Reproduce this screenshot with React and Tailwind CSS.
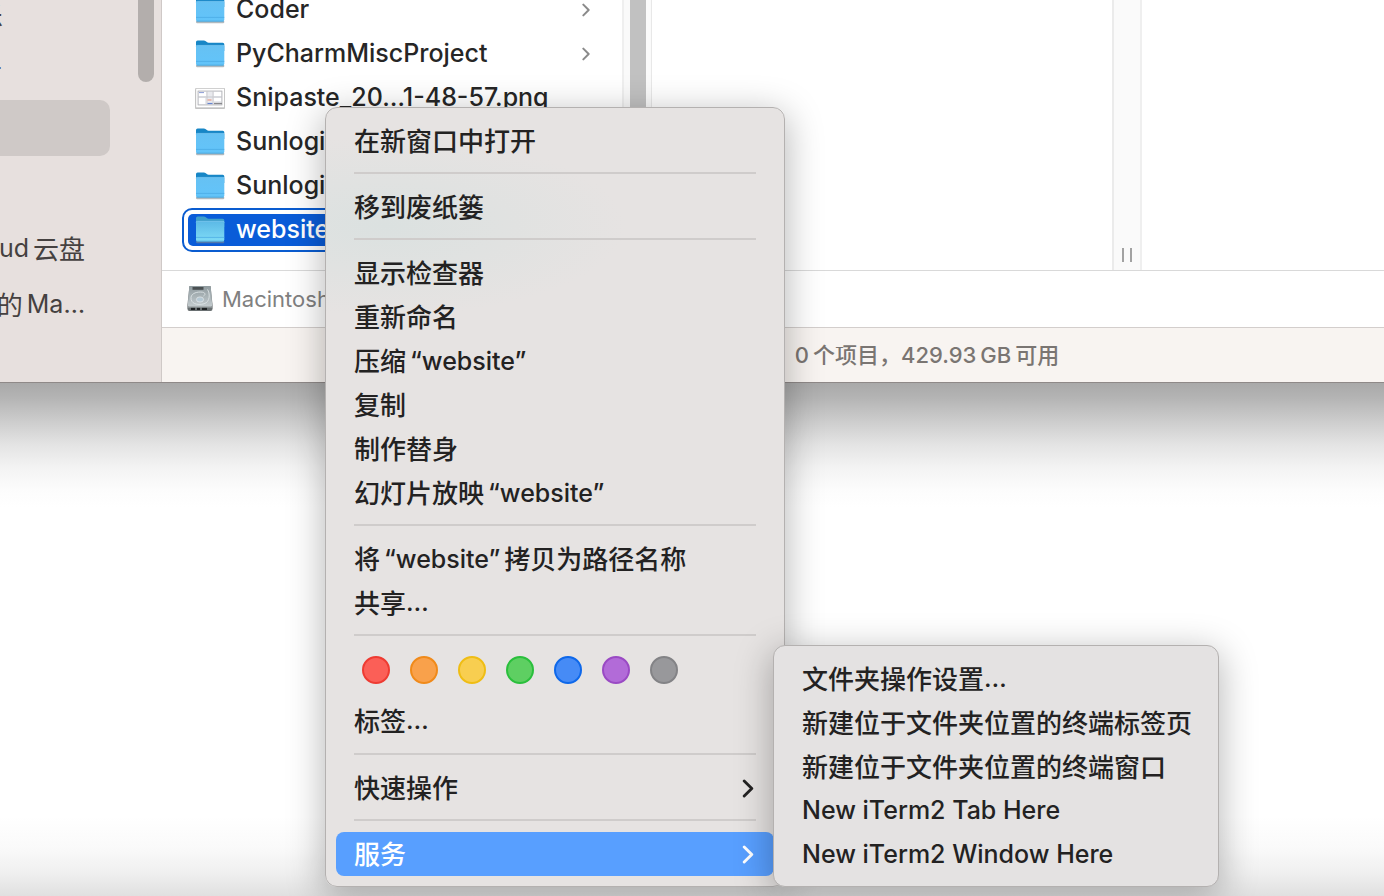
import React from 'react';

function Folder({ open }) {
  const face = open ? 'url(#folderOpen)' : 'url(#folderFace)';
  return (
    <svg viewBox="0 0 32 30" className="h-[30px] w-8 shrink-0" aria-hidden="true">
      <defs>
        <linearGradient id="folderFace" x1="0" y1="0" x2="0" y2="1">
          <stop offset="0" stopColor="#66c1f3" />
          <stop offset="1" stopColor="#62c4fa" />
        </linearGradient>
        <linearGradient id="folderOpen" x1="0" y1="0" x2="0" y2="1">
          <stop offset="0" stopColor="#5cb9e6" />
          <stop offset="1" stopColor="#7fdcf7" />
        </linearGradient>
      </defs>
      <rect x="2" y="25.500" width="28.300" height="2.800" rx="1.200" fill="#7d8a92" opacity=".6" />
      <path d="M2 3Q2 1.400 3.600 1.400H9.800Q11 1.400 11.800 2.200L12.800 3.100Q13.500 3.700 14.600 3.700H28.700Q30.300 3.700 30.300 5.300V12H2Z" fill={open ? '#3f9fcb' : '#1786c6'} />
      <path d="M2 7.600Q2 6.400 3.200 6.400H29.100Q30.300 6.400 30.300 7.600V24.800Q30.300 26.600 28.500 26.600H3.800Q2 26.600 2 24.800Z" fill={face} />
      <path d="M2 7.400Q2 6.400 3.200 6.400H29.100Q30.300 6.400 30.300 7.400" fill="none" stroke="#8bd2f8" strokeWidth=".6" />
      <path d="M2 22.400H30.300" stroke="#48a9e2" strokeWidth=".7" />
      <path d="M2.600 26.200H29.700" stroke="#48a3d8" strokeWidth=".8" />
    </svg>
  );
}

function Shot() {
  return (
    <svg viewBox="0 0 32 30" className="h-[30px] w-8 shrink-0" aria-hidden="true">
      <rect x="1" y="6" width="30" height="20" rx="1" fill="#9c9c9c" opacity=".6" />
      <rect x="1.800" y="5.600" width="28.600" height="19.200" fill="#fff" stroke="#bdbdbd" strokeWidth=".7" />
      <rect x="4" y="8" width="24" height="14" fill="#e9eaee" stroke="#9a9a9e" strokeWidth=".6" />
      <path d="M5 9h7v4H5zM20 9h7v4h-7zM5 15h6v6H5zM20 15h7v3h-7z" fill="#fff" />
      <path d="M5 9.600h5" stroke="#7d8fd0" strokeWidth=".9" />
      <path d="M4 14h24" stroke="#b9bac0" strokeWidth=".7" />
      <path d="M13 8v14M19 8v14" stroke="#c6c6ca" strokeWidth=".8" />
      <path d="M13.500 17h4" stroke="#e8ab9d" strokeWidth="1.500" />
      <path d="M13.500 20.500h5" stroke="#6685d0" strokeWidth="1.200" />
      <path d="M20 20.500h8" stroke="#88888c" strokeWidth="1.300" />
    </svg>
  );
}

function Disk() {
  return (
    <svg viewBox="0 0 28 28" className="h-7 w-7 shrink-0" aria-hidden="true">
      <defs>
        <linearGradient id="diskFace" x1="0" y1="0" x2="0" y2="1">
          <stop offset="0" stopColor="#8f9a9e" />
          <stop offset="1" stopColor="#c3cbce" />
        </linearGradient>
      </defs>
      <path d="M3.500 1H24.500L26.600 20V23.500Q26.600 26 24.500 26H3.500Q1.400 26 1.400 23.500V20Z" fill="#6a7072" />
      <path d="M4.200 1H23.800Q24.600 1 24.800 2L26.200 20Q26.400 21.400 25 21.400H3Q1.600 21.400 1.800 20L3.200 2Q3.400 1 4.200 1Z" fill="url(#diskFace)" />
      <path d="M6.500 2H17.500V4.800H6.500Z" fill="#4a5052" />
      <path d="M21.500 4.500C24 8 24.500 17 18 18.800C11 20.600 4.500 18.500 5 12.500C5.500 8 11.500 6.500 16.500 7.200C19 7.600 20 9.500 17.500 11" fill="none" stroke="#dde3e5" strokeWidth=".9" />
      <ellipse cx="14" cy="14.500" rx="3.600" ry="2.600" fill="#b5c8d3" stroke="#e6eaec" strokeWidth=".7" />
      <path d="M5 22.800H9V25H5ZM11 22.800H14V25H11ZM16 22.800H21V25H16Z" fill="#1f2224" />
      <path d="M2 22H26" stroke="#d2d8da" strokeWidth=".6" />
    </svg>
  );
}

function Chevron({ className }) {
  return (
    <svg viewBox="0 0 12 20" fill="none" stroke="currentColor" strokeLinecap="round" strokeLinejoin="round" className={className} aria-hidden="true">
      <path d="M2 2L10 10L2 18" />
    </svg>
  );
}

/* Latin runs are set one step smaller than the Han characters around them. */
function Label({ text }) {
  const runs = text.match(/[\u2e80-\u9fff]+|[^\u2e80-\u9fff]+/g) || [];
  return runs.map((run, i) =>
    /[\u2e80-\u9fff]/.test(run) ? (
      <span key={i}>{run}</span>
    ) : (
      <span key={i} className="whitespace-pre text-[25px]">{run}</span>
    )
  );
}

const files = [
  { name: 'Coder', folder: true, arrow: true },
  { name: 'PyCharmMiscProject', folder: true, arrow: true },
  { name: 'Snipaste_20…1-48-57.png' },
  { name: 'SunloginClient', folder: true },
  { name: 'SunloginFiles', folder: true },
];

function Sidebar() {
  const row = 'flex h-14 shrink-0 items-center justify-end whitespace-nowrap';
  return (
    <aside className="flex w-[162px] shrink-0 border-r border-[#cfc9c7] bg-[#e7e0de] text-[26px] text-[#454140]">
      <nav className="flex flex-1 flex-col justify-end overflow-hidden pb-[49px]">
        <a href="#music" className={`${row} w-[3px]`}>音乐</a>
        <a href="#pictures" className={`${row} w-[3px]`}>图片</a>
        <a href="#current" aria-label="当前位置" className="mb-[65px] block h-14 w-[110px] shrink-0 rounded-r-[10px] bg-[#cfc9c7]" />
        <a href="#icloud" className={`${row} w-[85px]`}><Label text="iCloud" /><span className="ml-1">云盘</span></a>
        <a href="#mac" className={`${row} w-[85px]`}><span className="mr-1">的</span><Label text="Ma…" /></a>
      </nav>
      <div className="mr-[7px] h-[82px] w-4 rounded-b-full bg-[#b3aeac]" />
    </aside>
  );
}

function FileColumn() {
  return (
    <section className="flex w-[490px] shrink-0 border-r border-[#e8e8e8]">
      <ul className="flex flex-1 flex-col justify-end overflow-hidden pb-[18px] pl-5 text-[25px] font-medium text-[#262626]">
        {files.map((f) => (
          <li key={f.name} className="flex h-11 shrink-0 items-center pl-3 pr-8">
            {f.folder ? <Folder /> : <Shot />}
            <span className="ml-2.5 flex-1 whitespace-nowrap">{f.name}</span>
            {f.arrow && <Chevron className="h-3.5 w-2 stroke-[3] text-[#8a8a8a]" />}
          </li>
        ))}
        <li className="flex h-11 shrink-0 rounded-[10px] border-2 border-[#0a5cd0] p-1">
          <div className="flex flex-1 items-center rounded-[5px] bg-[#0a5cd8] pl-1.5 text-white">
            <Folder open />
            <span className="ml-2.5">website</span>
          </div>
        </li>
      </ul>
      <div className="flex w-[29px] justify-center border-l-2 border-[#efefef] bg-[#fafafa]">
        <div className="w-4 bg-[#c1c1c1]" />
      </div>
    </section>
  );
}

function FinderWindow() {
  return (
    <main className="flex h-[383px] shrink-0 border-b border-[#8f8988]">
      <Sidebar />
      <div className="flex min-w-0 flex-1 flex-col bg-white">
        <div className="flex min-h-0 flex-1 border-b border-[#d9d9d9]">
          <FileColumn />
          <section className="w-[490px] shrink-0 border-r-2 border-[#efefef]">
            <div className="ml-auto flex h-full w-7 items-end justify-center gap-1.5 border-l-2 border-[#ebebeb] bg-[#fafafa] pb-2">
              <span className="h-3.5 w-0.5 bg-[#a2a2a2]" />
              <span className="h-3.5 w-0.5 bg-[#a2a2a2]" />
            </div>
          </section>
          <section className="flex-1" />
        </div>
        <div className="flex h-14 items-center pl-6 text-[22px] text-[#808080]">
          <Disk />
          <span className="ml-2">Macintosh HD</span>
        </div>
        <footer className="flex h-[55px] items-center justify-center border-t border-[#d3cecc] bg-[#f8f4f1] pl-[308px] text-[22px] font-medium text-[#7a7572]">
          <span>0</span><span className="ml-1">个项目，429.93</span><span className="mx-1">GB</span><span>可用</span>
        </footer>
      </div>
    </main>
  );
}

const menuBox = 'rounded-xl border border-[#b4b1b0] shadow-[0_8px_36px_2px_rgba(0,0,0,0.28)] text-[26px] font-medium text-[#232222]';
const item = 'flex h-11 w-full items-center whitespace-nowrap px-[18px] text-left';

function Item({ children }) {
  return <button type="button" role="menuitem" className={item}>{children}</button>;
}

function Rule() {
  return <hr className="mx-[18px] mb-[11px] mt-[9px] border-t-2 border-[#cfcccb]" />;
}

const tags = [
  ['红色', 'bg-[#fb5f57] border-[#ee3b32]'],
  ['橙色', 'bg-[#f9a14b] border-[#f08a1a]'],
  ['黄色', 'bg-[#f8ce50] border-[#efbd14]'],
  ['绿色', 'bg-[#5ecf62] border-[#2abf3c]'],
  ['蓝色', 'bg-[#468bf6] border-[#0e68ea]'],
  ['紫色', 'bg-[#b26bd8] border-[#9a4ac4]'],
  ['灰色', 'bg-[#98989b] border-[#838386]'],
];

function ContextMenu() {
  return (
    <div role="menu" className={`${menuBox} absolute left-[325px] top-[107px] w-[460px] bg-[radial-gradient(ellipse_240px_90px_at_60px_118px,#dbe1e0,#e6e3e2)] px-2.5 pb-2.5 pt-[11px]`}>
      <Item>在新窗口中打开</Item>
      <Rule />
      <Item>移到废纸篓</Item>
      <Rule />
      <Item>显示检查器</Item>
      <Item>重新命名</Item>
      <Item>压缩<span className="ml-1"><Label text="“website”" /></span></Item>
      <Item>复制</Item>
      <Item>制作替身</Item>
      <Item>幻灯片放映<span className="ml-1"><Label text="“website”" /></span></Item>
      <Rule />
      <Item>将<span className="mx-1"><Label text="“website”" /></span>拷贝为路径名称</Item>
      <Item><Label text="共享…" /></Item>
      <Rule />
      <div className="flex gap-5 px-[26px] pb-[15px] pt-[9px]">
        {tags.map(([name, tone]) => (
          <button key={name} type="button" aria-label={name} className={`h-7 w-7 rounded-full border-2 ${tone}`} />
        ))}
      </div>
      <Item><Label text="标签…" /></Item>
      <div className="h-px" />
      <Rule />
      <Item>
        <span className="flex-1">快速操作</span>
        <Chevron className="mr-0.5 h-[19px] w-3 stroke-[3]" />
      </Item>
      <Rule />
      <button type="button" role="menuitem" aria-expanded="true" className={`${item} rounded-lg bg-[#589fff] text-white`}>
        <span className="flex-1">服务</span>
        <Chevron className="mr-0.5 h-[19px] w-3 stroke-[3]" />
      </button>
    </div>
  );
}

function ServicesMenu() {
  return (
    <div role="menu" className={`${menuBox} absolute left-[773px] top-[645px] w-[446px] bg-[#e4e2e2] px-2.5 pb-[9px] pt-[11px]`}>
      <Item><Label text="文件夹操作设置…" /></Item>
      <Item>新建位于文件夹位置的终端标签页</Item>
      <Item>新建位于文件夹位置的终端窗口</Item>
      <Item><Label text="New iTerm2 Tab Here" /></Item>
      <Item><Label text="New iTerm2 Window Here" /></Item>
    </div>
  );
}

export default function App() {
  return (
    <div className='relative flex min-h-screen flex-col overflow-hidden bg-white font-[Inter,"Noto_Sans_CJK_SC",sans-serif]'>
      <FinderWindow />
      <div className="h-[124px] bg-[linear-gradient(#a9a9a9,#b4b4b4_12%,#cecece_32%,#e4e4e4_50%,#f3f3f3_68%,#fcfcfc_86%,#fff)]" />
      <div className="mt-auto h-20 bg-[linear-gradient(#fff,#fafafa_40%,#f0f0f0_70%,#e0e0e0)]" />
      <ContextMenu />
      <ServicesMenu />
    </div>
  );
}
